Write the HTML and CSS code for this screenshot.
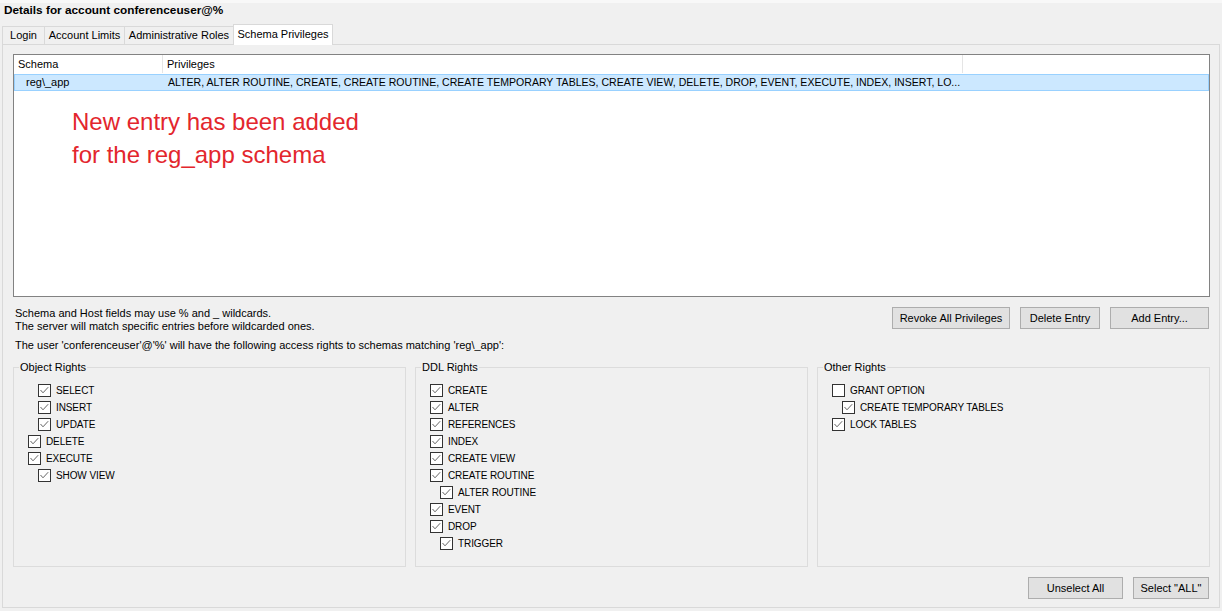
FILE: index.html
```html
<!DOCTYPE html>
<html>
<head>
<meta charset="utf-8">
<link rel="stylesheet" href="styles.css">
</head>
<body>
<div class="topline"></div>
<div class="title">Details for account conferenceuser@%</div>
<div class="tabs">
  <div class="tab t-login">Login</div>
  <div class="tab t-limits">Account Limits</div>
  <div class="tab t-roles">Administrative Roles</div>
  <div class="tab t-schema active">Schema Privileges</div>
</div>
<div class="panel">
  <div class="grid">
    <div class="ghead">
      <div class="hcell c1">Schema</div>
      <div class="hcell c2">Privileges</div>
      <div class="hcell c3"></div>
    </div>
    <div class="grow selected">
      <div class="rcell r1">reg\_app</div>
      <div class="rcell r2 caps">ALTER, ALTER ROUTINE, CREATE, CREATE ROUTINE, CREATE TEMPORARY TABLES, CREATE VIEW, DELETE, DROP, EVENT, EXECUTE, INDEX, INSERT, LO...</div>
    </div>
    <div class="note">New entry has been added<br>for the reg_app schema</div>
  </div>

  <div class="inforow">
    <div class="infotext">
      <div>Schema and Host fields may use % and _ wildcards.</div>
      <div>The server will match specific entries before wildcarded ones.</div>
    </div>
    <div class="btns">
      <button class="btn b-revoke">Revoke All Privileges</button>
      <button class="btn b-delete">Delete Entry</button>
      <button class="btn b-add">Add Entry...</button>
    </div>
  </div>
  <div class="userline">The user 'conferenceuser'@'%' will have the following access rights to schemas matching 'reg\_app':</div>

  <div class="groups">
    <fieldset class="group">
      <legend>Object Rights</legend>
      <div class="cbrow ind"><svg class="cb" viewBox="0 0 13 13"><rect x=".5" y=".5" width="12" height="12"/><path d="M2.5 6 L5 8.8 L10.2 3.2"/></svg><span>SELECT</span></div>
      <div class="cbrow ind"><svg class="cb" viewBox="0 0 13 13"><rect x=".5" y=".5" width="12" height="12"/><path d="M2.5 6 L5 8.8 L10.2 3.2"/></svg><span>INSERT</span></div>
      <div class="cbrow ind"><svg class="cb" viewBox="0 0 13 13"><rect x=".5" y=".5" width="12" height="12"/><path d="M2.5 6 L5 8.8 L10.2 3.2"/></svg><span>UPDATE</span></div>
      <div class="cbrow"><svg class="cb" viewBox="0 0 13 13"><rect x=".5" y=".5" width="12" height="12"/><path d="M2.5 6 L5 8.8 L10.2 3.2"/></svg><span>DELETE</span></div>
      <div class="cbrow"><svg class="cb" viewBox="0 0 13 13"><rect x=".5" y=".5" width="12" height="12"/><path d="M2.5 6 L5 8.8 L10.2 3.2"/></svg><span>EXECUTE</span></div>
      <div class="cbrow ind"><svg class="cb" viewBox="0 0 13 13"><rect x=".5" y=".5" width="12" height="12"/><path d="M2.5 6 L5 8.8 L10.2 3.2"/></svg><span>SHOW VIEW</span></div>
    </fieldset>
    <fieldset class="group">
      <legend>DDL Rights</legend>
      <div class="cbrow"><svg class="cb" viewBox="0 0 13 13"><rect x=".5" y=".5" width="12" height="12"/><path d="M2.5 6 L5 8.8 L10.2 3.2"/></svg><span>CREATE</span></div>
      <div class="cbrow"><svg class="cb" viewBox="0 0 13 13"><rect x=".5" y=".5" width="12" height="12"/><path d="M2.5 6 L5 8.8 L10.2 3.2"/></svg><span>ALTER</span></div>
      <div class="cbrow"><svg class="cb" viewBox="0 0 13 13"><rect x=".5" y=".5" width="12" height="12"/><path d="M2.5 6 L5 8.8 L10.2 3.2"/></svg><span>REFERENCES</span></div>
      <div class="cbrow"><svg class="cb" viewBox="0 0 13 13"><rect x=".5" y=".5" width="12" height="12"/><path d="M2.5 6 L5 8.8 L10.2 3.2"/></svg><span>INDEX</span></div>
      <div class="cbrow"><svg class="cb" viewBox="0 0 13 13"><rect x=".5" y=".5" width="12" height="12"/><path d="M2.5 6 L5 8.8 L10.2 3.2"/></svg><span>CREATE VIEW</span></div>
      <div class="cbrow"><svg class="cb" viewBox="0 0 13 13"><rect x=".5" y=".5" width="12" height="12"/><path d="M2.5 6 L5 8.8 L10.2 3.2"/></svg><span>CREATE ROUTINE</span></div>
      <div class="cbrow ind"><svg class="cb" viewBox="0 0 13 13"><rect x=".5" y=".5" width="12" height="12"/><path d="M2.5 6 L5 8.8 L10.2 3.2"/></svg><span>ALTER ROUTINE</span></div>
      <div class="cbrow"><svg class="cb" viewBox="0 0 13 13"><rect x=".5" y=".5" width="12" height="12"/><path d="M2.5 6 L5 8.8 L10.2 3.2"/></svg><span>EVENT</span></div>
      <div class="cbrow"><svg class="cb" viewBox="0 0 13 13"><rect x=".5" y=".5" width="12" height="12"/><path d="M2.5 6 L5 8.8 L10.2 3.2"/></svg><span>DROP</span></div>
      <div class="cbrow ind"><svg class="cb" viewBox="0 0 13 13"><rect x=".5" y=".5" width="12" height="12"/><path d="M2.5 6 L5 8.8 L10.2 3.2"/></svg><span>TRIGGER</span></div>
    </fieldset>
    <fieldset class="group">
      <legend>Other Rights</legend>
      <div class="cbrow"><svg class="cb" viewBox="0 0 13 13"><rect x=".5" y=".5" width="12" height="12"/></svg><span>GRANT OPTION</span></div>
      <div class="cbrow ind"><svg class="cb" viewBox="0 0 13 13"><rect x=".5" y=".5" width="12" height="12"/><path d="M2.5 6 L5 8.8 L10.2 3.2"/></svg><span>CREATE TEMPORARY TABLES</span></div>
      <div class="cbrow"><svg class="cb" viewBox="0 0 13 13"><rect x=".5" y=".5" width="12" height="12"/><path d="M2.5 6 L5 8.8 L10.2 3.2"/></svg><span>LOCK TABLES</span></div>
    </fieldset>
  </div>

  <div class="bottombtns">
    <button class="btn b-unselect">Unselect All</button>
    <button class="btn b-all">Select "ALL"</button>
  </div>
</div>
</body>
</html>
```
FILE: styles.css
```css
* { box-sizing: border-box; }
html, body { margin: 0; padding: 0; }
body {
  background: #f0f0f0;
  font-family: "Liberation Sans", Arial, sans-serif;
  font-size: 11px;
  color: #000;
  width: 1222px;
  height: 611px;
  overflow: hidden;
}
.topline { height: 3px; background: #f8f8f8; }
.title {
  height: 14px;
  line-height: 14px;
  padding-left: 4px;
  font-weight: bold;
  font-size: 11.8px;
}
.tabs {
  margin-top: 7px;
  height: 20px;
  display: flex;
  align-items: flex-end;
  padding-left: 2px;
  position: relative;
  z-index: 2;
}
.tab {
  height: 18px;
  line-height: 17px;
  border: 1px solid #d9d9d9;
  border-bottom: none;
  background: #f0f0f0;
  text-align: center;
  margin-right: -1px;
}
.t-login { width: 43px; }
.t-limits { width: 81px; }
.t-roles { width: 110px; }
.t-schema { width: 100px; }
.tab.active {
  height: 21px;
  line-height: 18px;
  background: #fff;
  margin-bottom: -1px;
  position: relative;
}
.panel {
  margin-left: 2px;
  width: 1218px;
  height: 564px;
  border: 1px solid #d9d9d9;
  padding: 9px 9px 9px 10px;
  background: #f0f0f0;
}
.grid {
  height: 243px;
  border: 1px solid #828282;
  background: #fff;
  width: 1197px;
}
.ghead {
  display: flex;
  height: 18px;
  line-height: 18px;
}
.hcell { border-right: 1px solid #e5e5e5; padding-left: 4px; }
.c1 { width: 149px; }
.c2 { width: 800px; }
.c3 { width: 0; border-right: none; }
.grow {
  margin-top: 1px;
  display: flex;
  height: 17px;
  line-height: 15px;
  border: 1px solid #99d1ff;
  background: #cce8ff;
}
.rcell { white-space: nowrap; overflow: hidden; }
.r1 { width: 148px; padding-left: 11px; }
.r2 { width: 800px; padding-left: 5px; }
.caps { font-size: 10.55px; }
.note {
  margin-top: 14px;
  padding-left: 58px;
  font-size: 24px;
  line-height: 33px;
  color: #e3262d;
}
.inforow {
  margin-top: 10px;
  display: flex;
  justify-content: space-between;
  width: 1197px;
  height: 26px;
  padding-left: 2px;
}
.infotext div { line-height: 13px; }
.btns { display: flex; gap: 10px; padding-right: 1px; }
.btn {
  height: 22px;
  padding: 0;
  background: #e1e1e1;
  border: 1px solid #adadad;
  font-family: "Liberation Sans", Arial, sans-serif;
  font-size: 11px;
  color: #000;
  text-align: center;
}
.b-revoke { width: 118px; }
.b-delete { width: 80px; }
.b-add { width: 99px; }
.b-unselect { width: 95px; }
.b-all { width: 76px; }
.userline {
  margin-top: 6px;
  line-height: 13px;
  padding-left: 2px;
}
.groups {
  margin-top: 9px;
  display: grid;
  grid-template-columns: 393px 393px 393px;
  column-gap: 9px;
  width: 1197px;
}
.group {
  margin: 0;
  min-width: 0;
  height: 206px;
  border: 1px solid #dcdcdc;
  padding: 8px 4px 0 14px;
}
.group legend {
  margin-left: -9px;
  padding: 0 1px;
  line-height: 13px;
  font-size: 11px;
}
.cbrow {
  display: flex;
  align-items: center;
  height: 17px;
  font-size: 10px;
  letter-spacing: -0.1px;
}
.cbrow.ind { padding-left: 10px; }
.cb {
  width: 13px;
  height: 13px;
  flex: none;
  margin-right: 5px;
}
.cb rect { fill: #fff; stroke: #333; stroke-width: 1; }
.cb path { fill: none; stroke: #666; stroke-width: 1; }
.bottombtns {
  margin-top: 10px;
  display: flex;
  justify-content: flex-end;
  gap: 10px;
  width: 1197px;
  padding-right: 1px;
}
```
